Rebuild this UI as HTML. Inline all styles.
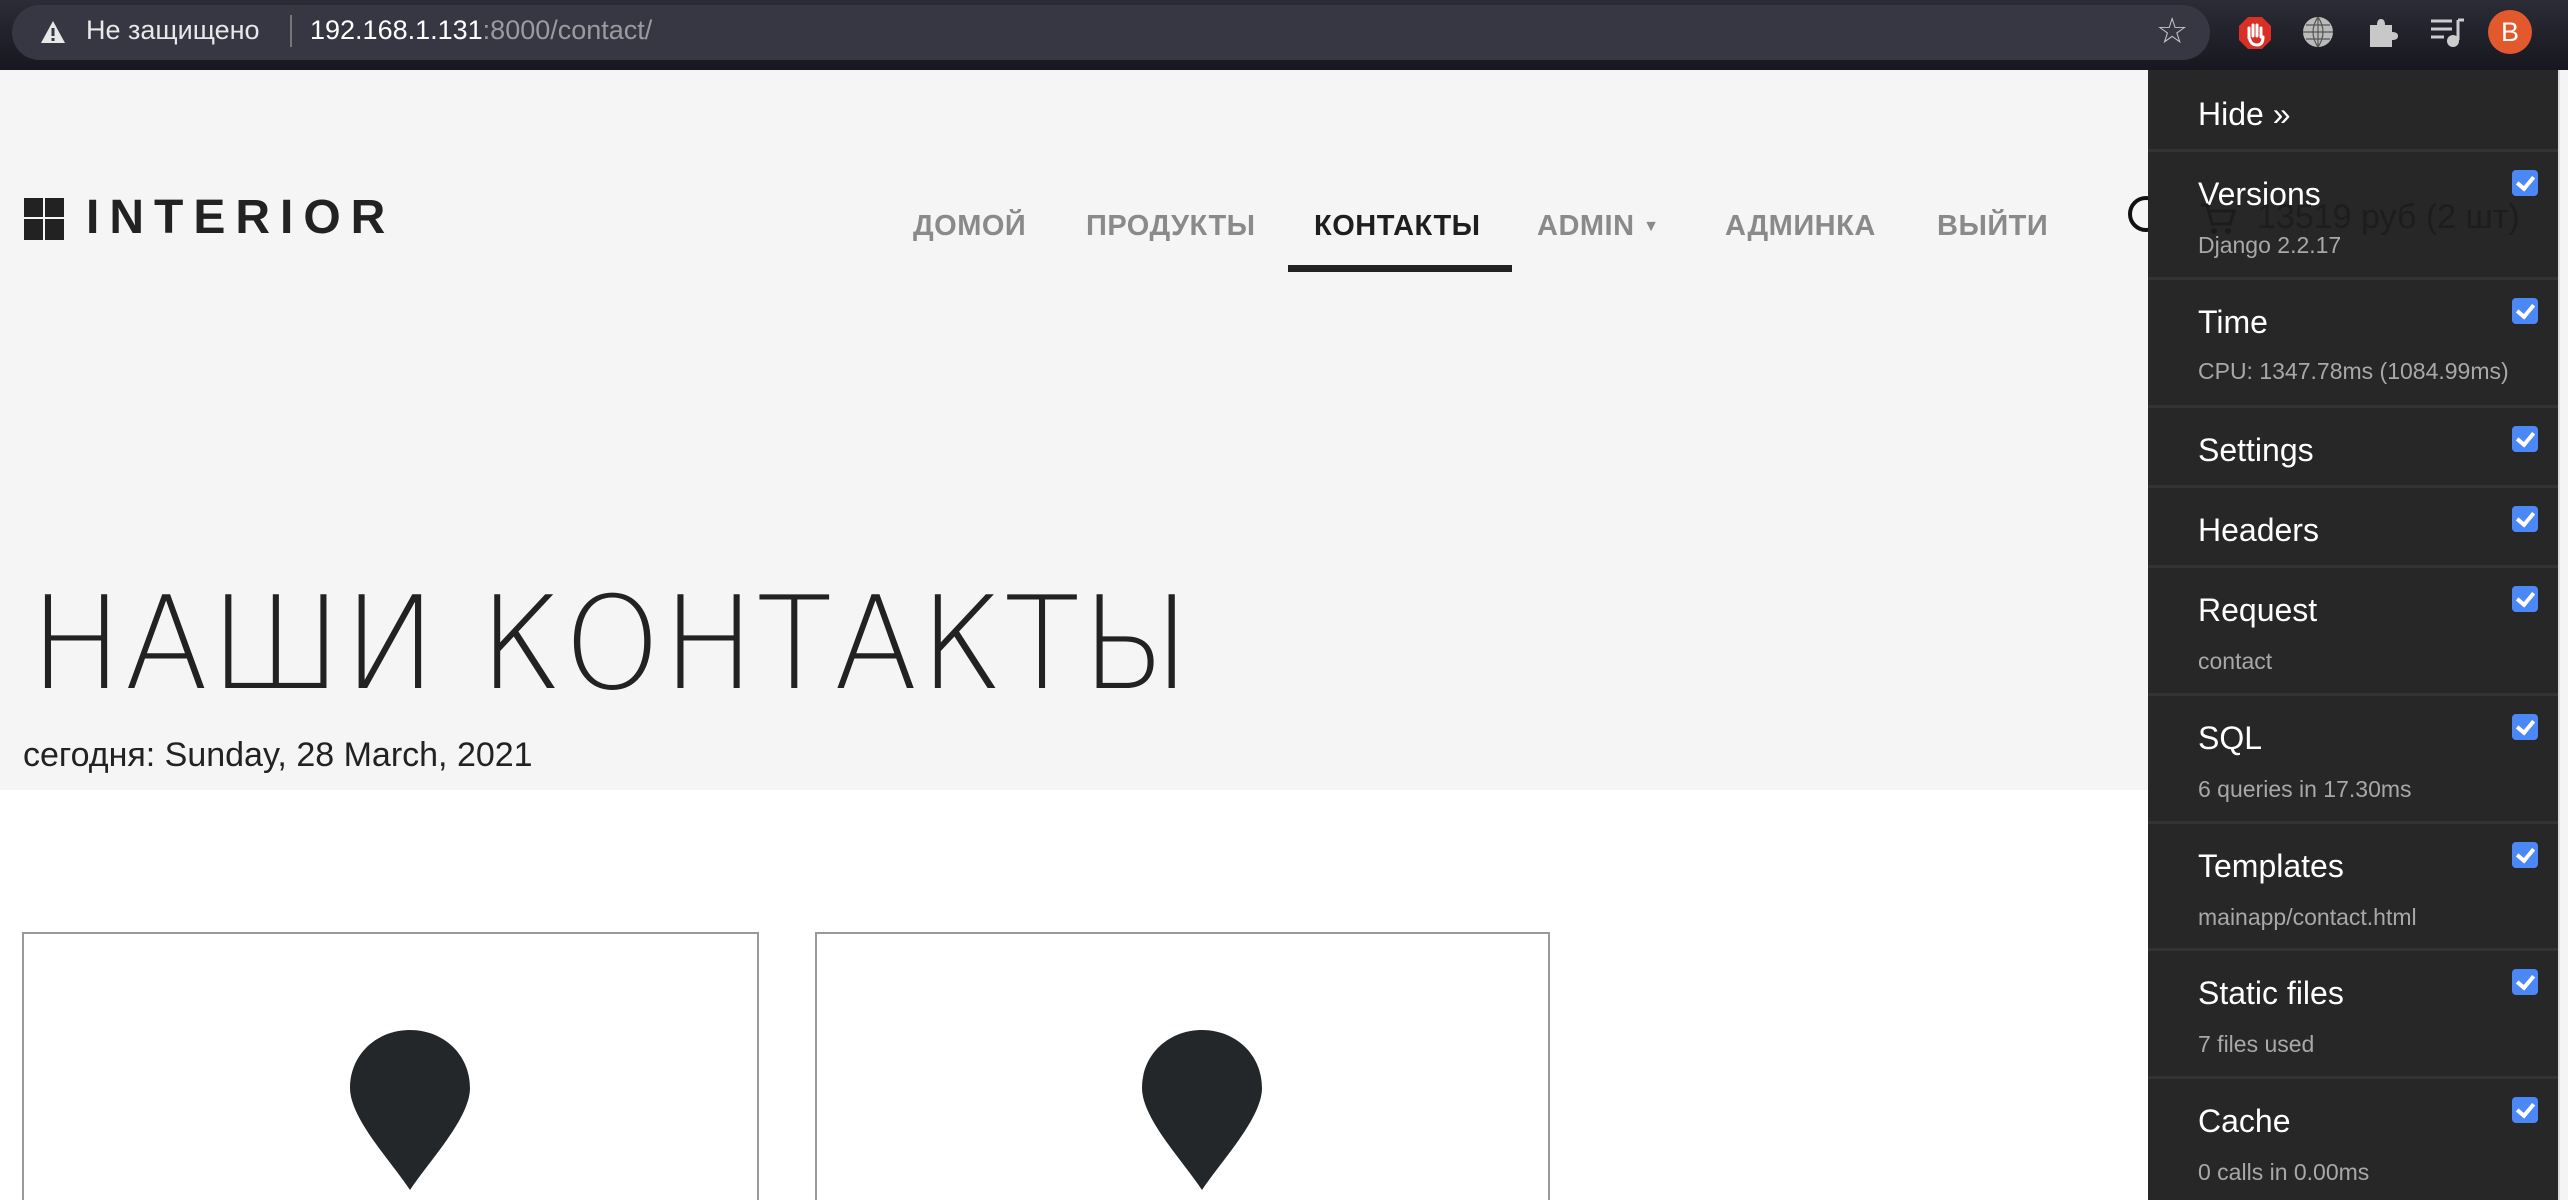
<!DOCTYPE html>
<html><head><meta charset="utf-8"><style>
*{margin:0;padding:0;box-sizing:border-box}
html,body{width:2568px;height:1200px;overflow:hidden}
body{background:#fff;font-family:"Liberation Sans",sans-serif;position:relative}
.a{position:absolute;white-space:nowrap}
.nav{position:absolute;top:210px;font-size:29px;font-weight:bold;color:#8a8a8a;letter-spacing:0.5px}
.row{position:absolute;left:0;width:410px;border-top:3px solid #333}
.t{position:absolute;left:50px;font-size:32px;color:#fff}
.s{position:absolute;left:50px;font-size:23px;color:#a8a8a8}
.cb{position:absolute;left:364px;width:26px;height:26px;background:#4b87f5;border-radius:4px}
.cb:after{content:"";position:absolute;left:8px;top:3px;width:7px;height:13px;border:solid #fff;border-width:0 4px 4px 0;transform:rotate(40deg)}
</style></head><body>
<div class="a" style="left:0;top:0;width:2568px;height:70px;background:linear-gradient(#2b2c36,#16171f)"></div>
<div class="a" style="left:12px;top:5px;width:2198px;height:55px;background:#363743;border-radius:28px"></div>
<svg class="a" style="left:40px;top:20px" width="26" height="24" viewBox="0 0 26 24"><path d="M13 1L25 23H1Z" fill="#e8e8e8"/><rect x="11.5" y="8" width="3" height="8" fill="#363743"/><rect x="11.5" y="18" width="3" height="3" fill="#363743"/></svg>
<div class="a" style="left:86px;top:15px;font-size:27px;color:#e8e8e8">Не защищено</div>
<div class="a" style="left:290px;top:15px;width:2px;height:32px;background:#777"></div>
<div class="a" style="left:310px;top:15px;font-size:27px;color:#fff">192.168.1.131<span style="color:#9a9a9f">:8000/contact/</span></div>
<div class="a" style="left:2156px;top:10px;font-size:36px;color:#c8c8c8">☆</div>
<svg class="a" style="left:2238px;top:16px" width="34" height="34" viewBox="0 0 34 34"><polygon points="10,1 24,1 33,10 33,24 24,33 10,33 1,24 1,10" fill="#d93025"/><path d="M11 22V12M15 20V9M19 20V9M23 21V12M11 20q1 9 8 9q6 0 6-8" stroke="#fff" stroke-width="3" fill="none" stroke-linecap="round"/></svg>
<svg class="a" style="left:2302px;top:16px" width="32" height="32" viewBox="0 0 32 32"><circle cx="16" cy="16" r="15" fill="#bbb"/><path d="M1 16H31M16 1V31M4 9H28M4 23H28M16 1Q6 16 16 31M16 1Q26 16 16 31" stroke="#555" stroke-width="1.2" fill="none"/></svg>
<svg class="a" style="left:2368px;top:17px" width="30" height="30" viewBox="0 0 30 30"><path d="M2 8H9Q9 2 13 2Q17 2 17 8H24V15Q30 15 30 19Q30 23 24 23V30H2Z" fill="#c8c8c8"/></svg>
<svg class="a" style="left:2430px;top:18px" width="34" height="30" viewBox="0 0 34 30"><path d="M1 3H22M1 11H22M1 19H14" stroke="#ccc" stroke-width="3"/><path d="M28 2V22" stroke="#ccc" stroke-width="3"/><circle cx="23" cy="23" r="6" fill="#ccc"/><path d="M28 2H34" stroke="#ccc" stroke-width="3"/></svg>
<div class="a" style="left:2488px;top:10px;width:44px;height:44px;border-radius:50%;background:#e2592d;color:#fff;font-size:27px;text-align:center;line-height:44px">B</div>
<div class="a" style="left:0;top:70px;width:2148px;height:720px;background:#f5f5f5"></div>
<div class="a" style="left:24px;top:198px;width:19px;height:19px;background:#222"></div>
<div class="a" style="left:45px;top:198px;width:19px;height:19px;background:#222"></div>
<div class="a" style="left:24px;top:219px;width:19px;height:21px;background:#222"></div>
<div class="a" style="left:45px;top:219px;width:19px;height:21px;background:#222"></div>
<div class="a" style="left:86px;top:193px;font-size:48px;font-weight:bold;color:#222;letter-spacing:10px;line-height:50px">INTERIOR</div>
<div class="nav" style="left:913px">ДОМОЙ</div>
<div class="nav" style="left:1086px">ПРОДУКТЫ</div>
<div class="nav" style="left:1314px;color:#1e1e1e">КОНТАКТЫ</div>
<div class="nav" style="left:1537px">ADMIN <span style="font-size:16px;vertical-align:4px">▼</span></div>
<div class="nav" style="left:1725px">АДМИНКА</div>
<div class="nav" style="left:1937px">ВЫЙТИ</div>
<div class="a" style="left:1288px;top:265px;width:224px;height:7px;background:#222"></div>
<svg class="a" style="left:2126px;top:194px" width="50" height="50" viewBox="0 0 50 50"><circle cx="20" cy="20" r="16" stroke="#111" stroke-width="4" fill="none"/><path d="M32 32L46 46" stroke="#111" stroke-width="4.5"/></svg>
<div class="a" style="left:30px;top:575px;font-family:'DejaVu Sans',sans-serif;font-weight:200;font-size:128px;color:#222;letter-spacing:2px;line-height:140px;transform:scaleX(0.96);transform-origin:left">НАШИ КОНТАКТЫ</div>
<div class="a" style="left:23px;top:736px;font-size:34px;color:#222">сегодня: Sunday, 28 March, 2021</div>
<div class="a" style="left:22px;top:932px;width:737px;height:268px;border:2px solid #999;border-bottom:none"></div>
<div class="a" style="left:815px;top:932px;width:735px;height:268px;border:2px solid #999;border-bottom:none"></div>
<svg class="a" style="left:350px;top:1030px" width="120" height="160" viewBox="0 0 120 160"><path d="M60 0C27 0 0 24 0 58C0 88 40 130 60 160C80 130 120 88 120 58C120 24 93 0 60 0Z" fill="#24272a"/></svg>
<svg class="a" style="left:1142px;top:1030px" width="120" height="160" viewBox="0 0 120 160"><path d="M60 0C27 0 0 24 0 58C0 88 40 130 60 160C80 130 120 88 120 58C120 24 93 0 60 0Z" fill="#24272a"/></svg>
<div class="a" style="left:2558px;top:70px;width:10px;height:1130px;background:#f4f4f4;border-left:2px solid #ddd"></div>
<div class="a" style="left:2148px;top:70px;width:410px;height:1130px;background:#272727;overflow:hidden">
<div class="t" style="top:26px;font-size:32px">Hide »</div>
<div class="row" style="top:79px;height:128px"><div class="t" style="top:24px">Versions</div><div class="s" style="top:80px">Django 2.2.17</div><div class="cb" style="top:18px"></div></div>
<div class="row" style="top:207px;height:128px"><div class="t" style="top:24px">Time</div><div class="s" style="top:78px">CPU: 1347.78ms (1084.99ms)</div><div class="cb" style="top:18px"></div></div>
<div class="row" style="top:335px;height:80px"><div class="t" style="top:24px">Settings</div><div class="cb" style="top:18px"></div></div>
<div class="row" style="top:415px;height:80px"><div class="t" style="top:24px">Headers</div><div class="cb" style="top:18px"></div></div>
<div class="row" style="top:495px;height:128px"><div class="t" style="top:24px">Request</div><div class="s" style="top:80px">contact</div><div class="cb" style="top:18px"></div></div>
<div class="row" style="top:623px;height:128px"><div class="t" style="top:24px">SQL</div><div class="s" style="top:80px">6 queries in 17.30ms</div><div class="cb" style="top:18px"></div></div>
<div class="row" style="top:751px;height:127px"><div class="t" style="top:24px">Templates</div><div class="s" style="top:80px">mainapp/contact.html</div><div class="cb" style="top:18px"></div></div>
<div class="row" style="top:878px;height:128px"><div class="t" style="top:24px">Static files</div><div class="s" style="top:80px">7 files used</div><div class="cb" style="top:18px"></div></div>
<div class="row" style="top:1006px;height:124px"><div class="t" style="top:24px">Cache</div><div class="s" style="top:80px">0 calls in 0.00ms</div><div class="cb" style="top:18px"></div></div>
</div>
<svg class="a" style="left:2200px;top:202px" width="36" height="34" viewBox="0 0 36 34"><path d="M1 3H7L12 22H30L34 9H9" stroke="#1c1c1c" stroke-width="3" fill="none"/><circle cx="14" cy="29" r="3" fill="#1c1c1c"/><circle cx="28" cy="29" r="3" fill="#1c1c1c"/></svg>
<div class="a" style="left:2257px;top:198px;font-size:34px;color:#1d1d1d">13519 руб (2 шт)</div>
</body></html>
